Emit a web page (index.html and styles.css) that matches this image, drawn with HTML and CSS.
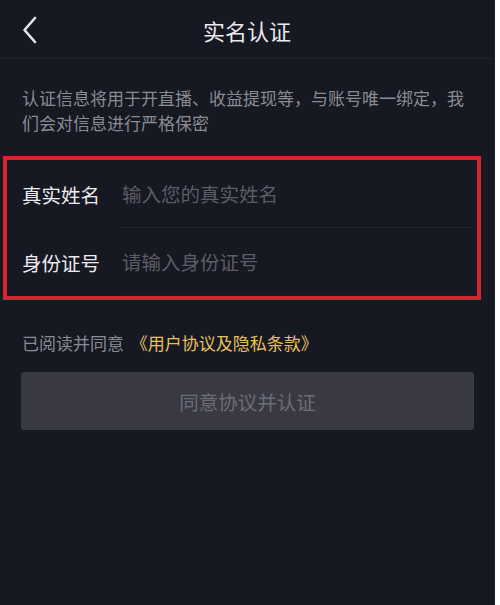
FILE: index.html
```html
<!DOCTYPE html>
<html lang="zh-CN">
<head>
  <meta charset="UTF-8">
  <meta name="viewport" content="width=device-width, initial-scale=1">
  <title>实名认证</title>
  <link rel="stylesheet" href="styles.css">
</head>
<body>

<div class="page">
  <!-- Top bar -->
  <header class="topbar">
    <span class="back">
      <svg width="16" height="28" viewBox="0 0 16 28"><path d="M13 2 L2.5 14 L13 26" fill="none" stroke="#e6e6ea" stroke-width="2.6" stroke-linecap="round" stroke-linejoin="round"/></svg>
    </span>
    <h1>实名认证</h1>
  </header>

  <p class="notice">认证信息将用于开直播、收益提现等，与账号唯一绑定，我们会对信息进行严格保密</p>

  <!-- Form -->
  <div class="form-box">
    <div class="row">
      <span class="label">真实姓名</span>
      <div class="field"><span class="placeholder">输入您的真实姓名</span></div>
    </div>
    <div class="row">
      <span class="label">身份证号</span>
      <div class="field last"><span class="placeholder">请输入身份证号</span></div>
    </div>
  </div>

  <p class="agree">已阅读并同意 <a href="#">《用户协议及隐私条款》</a></p>

  <button class="submit">同意协议并认证</button>
</div>

</body>
</html>
```

FILE: styles.css
```css
body { margin: 0; background: #fff; font-family: "Noto Sans CJK SC", "Noto Sans", sans-serif; }
.page { width: 495px; height: 605px; background: #161822; border-right: 1px solid #1e2029; box-sizing: border-box; overflow: hidden; }

.topbar { height: 58px; border-bottom: 1px solid #21232c; display: flex; align-items: center; justify-content: center; position: relative; }
.topbar h1 { margin: 0; font-size: 22px; font-weight: 400; color: #ecebef; line-height: 58px; padding-top: 2px; }
.back { position: absolute; left: 22px; top: 16px; }

.notice { margin: 26px 22px 0; font-size: 17px; line-height: 25px; color: #8b8b94; }

.form-box { margin: 21px 13px 0 3px; border: 4px solid #d6262f; padding: 0 5px 0 15px; }
.row { display: flex; align-items: center; height: 68px; }
.label { width: 98px; font-size: 19.5px; color: #ececf0; }
.field { flex: 1; height: 68px; display: flex; align-items: center; border-bottom: 1px solid #23252e; box-sizing: border-box; padding-left: 2px; }
.field.last { border-bottom-color: #1c1e27; }
.placeholder { font-size: 19.5px; color: #5c5d66; }

.agree { margin: 31px 22px 0; font-size: 17px; line-height: 24px; color: #8b8b94; }
.agree a { margin-left: 3px; color: #e8c062; text-decoration: none; }

.submit { display: block; margin: 17px 0 0 21px; width: 453px; height: 58px; border: 0; border-radius: 3px; background: #393943; color: #6d6d77; font-family: inherit; font-size: 19.5px; }
```
